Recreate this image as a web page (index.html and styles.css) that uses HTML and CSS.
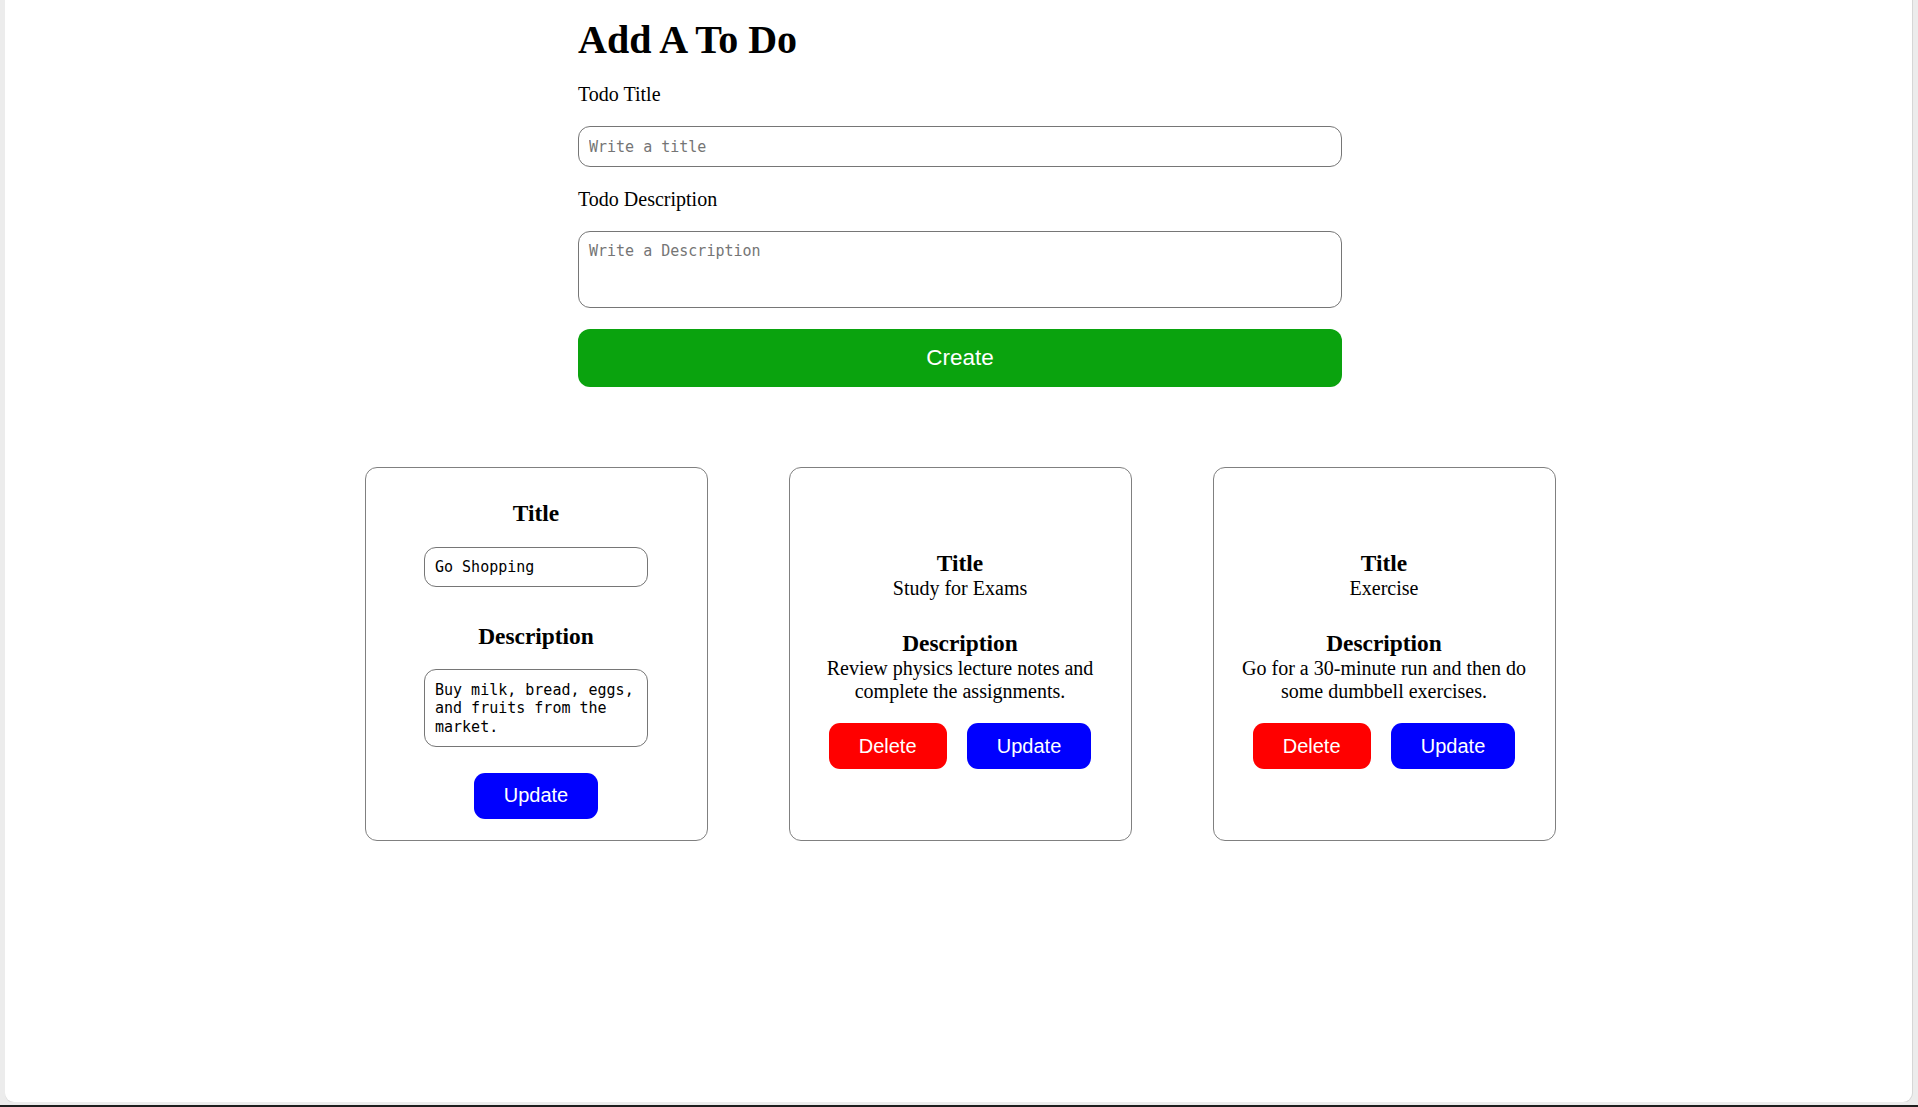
FILE: index.html
```html
<!DOCTYPE html>
<html lang="en">
<head>
<meta charset="utf-8">
<title>Todo App</title>
<link rel="stylesheet" href="styles.css">
</head>
<body>
<div class="window">
  <div class="form">
    <h1 class="heading">Add A To Do</h1>
    <div class="label label-first">Todo Title</div>
    <input class="field field-input" type="text" placeholder="Write a title">
    <div class="label">Todo Description</div>
    <textarea class="field field-area" placeholder="Write a Description"></textarea>
    <button class="btn-create">Create</button>
  </div>

  <div class="cards">
    <div class="card card-edit">
      <h3 class="card-h">Title</h3>
      <input class="card-input" type="text" value="Go Shopping">
      <h3 class="card-h card-h-desc-edit">Description</h3>
      <textarea class="card-area">Buy milk, bread, eggs, and fruits from the market.</textarea>
      <button class="btn btn-update btn-single">Update</button>
    </div>

    <div class="card card-view">
      <h3 class="card-h">Title</h3>
      <p class="card-text">Study for Exams</p>
      <h3 class="card-h card-h-desc">Description</h3>
      <p class="card-text">Review physics lecture notes and complete the assignments.</p>
      <div class="actions">
        <button class="btn btn-delete">Delete</button>
        <button class="btn btn-update">Update</button>
      </div>
    </div>

    <div class="card card-view">
      <h3 class="card-h">Title</h3>
      <p class="card-text">Exercise</p>
      <h3 class="card-h card-h-desc">Description</h3>
      <p class="card-text">Go for a 30-minute run and then do some dumbbell exercises.</p>
      <div class="actions">
        <button class="btn btn-delete">Delete</button>
        <button class="btn btn-update">Update</button>
      </div>
    </div>
  </div>
</div>
</body>
</html>
```

FILE: styles.css
```css
html {
  height: 1107px;
  background: linear-gradient(to top, #1e1e1e 2px, #ececec 2px);
}

body {
  margin: 0;
}

.window {
  margin-left: 5px;
  width: 1907px;
  height: 1102px;
  box-sizing: border-box;
  padding-left: 3px;
  background: #ffffff;
  border-radius: 0 0 9px 9px;
  box-shadow: 1px 0 0 #d6d6d6, 0 1px 0 #dcdcdc;
  font-family: "Liberation Serif", "Times New Roman", serif;
  color: #000;
  overflow: hidden;
}

/* ---------- form ---------- */
.form {
  width: 764px;
  margin: 0 auto;
  padding-top: 17.2px;
  display: flex;
  flex-direction: column;
}

.heading {
  margin: 0;
  font-size: 40px;
  line-height: 46px;
  font-weight: bold;
}

.label {
  font-size: 20px;
  line-height: 23px;
  margin-top: 20.75px;
}

.label-first {
  margin-top: 20.25px;
}

.field {
  box-sizing: border-box;
  width: 100%;
  border: 1px solid #767676;
  border-radius: 12px;
  padding: 0 10px;
  font-family: "DejaVu Sans Mono", "Liberation Mono", monospace;
  font-size: 15px;
  line-height: 19px;
  color: #000;
  background: #fff;
  outline: none;
}

.field::placeholder,
.card-input::placeholder,
.card-area::placeholder {
  color: #757575;
}

.field-input {
  margin-top: 19.55px;
  height: 41px;
  padding-top: 2px;
}

.field-area {
  margin-top: 20px;
  height: 77.5px;
  padding: 10.3px 10px 0 10px;
  resize: none;
  display: block;
}

.btn-create {
  margin-top: 20.75px;
  height: 58px;
  border: none;
  border-radius: 12px;
  background: #0aa30e;
  color: #fff;
  font-family: "Liberation Sans", Arial, sans-serif;
  font-size: 22.5px;
  padding: 0;
}

/* ---------- cards ---------- */
.cards {
  display: flex;
  justify-content: center;
  gap: 81px;
  margin-top: 80px;
}

.card {
  box-sizing: border-box;
  width: 343px;
  height: 374px;
  border: 1px solid #808080;
  border-radius: 12px;
  display: flex;
  flex-direction: column;
  align-items: center;
  padding-left: 15px;
  padding-right: 15px;
  text-align: center;
}

.card-edit {
  padding-top: 31.6px;
}

.card-view {
  padding-top: 82.3px;
}

.card-h {
  margin: 0;
  font-size: 23.4px;
  line-height: 27px;
  font-weight: bold;
}

.card-h-desc {
  margin-top: 30px;
}

.card-h-desc-edit {
  margin-top: 36px;
}

.card-text {
  margin: 0;
  font-size: 20px;
  line-height: 23px;
}

.card-input,
.card-area {
  box-sizing: border-box;
  width: 224px;
  border: 1px solid #767676;
  border-radius: 12px;
  padding: 0 10px;
  font-family: "DejaVu Sans Mono", "Liberation Mono", monospace;
  font-size: 15px;
  line-height: 19px;
  color: #000;
  background: #fff;
  outline: none;
}

.card-input {
  margin-top: 20px;
  height: 40px;
}

.card-area {
  margin-top: 19.7px;
  height: 78px;
  padding: 10.3px 9px 0 10px;
  line-height: 18.7px;
  resize: none;
  overflow: hidden;
  display: block;
  text-align: left;
}

.actions {
  display: flex;
  gap: 20.3px;
  margin-top: 20px;
}

.btn {
  height: 46px;
  border: none;
  border-radius: 11px;
  color: #fff;
  font-family: "Liberation Sans", Arial, sans-serif;
  font-size: 20px;
  line-height: 23px;
  padding: 0 30px;
}

.btn-delete {
  background: #ff0000;
}

.btn-update {
  background: #0000ff;
}

.btn-single {
  margin-top: 25.4px;
  height: 46.6px;
}
```
